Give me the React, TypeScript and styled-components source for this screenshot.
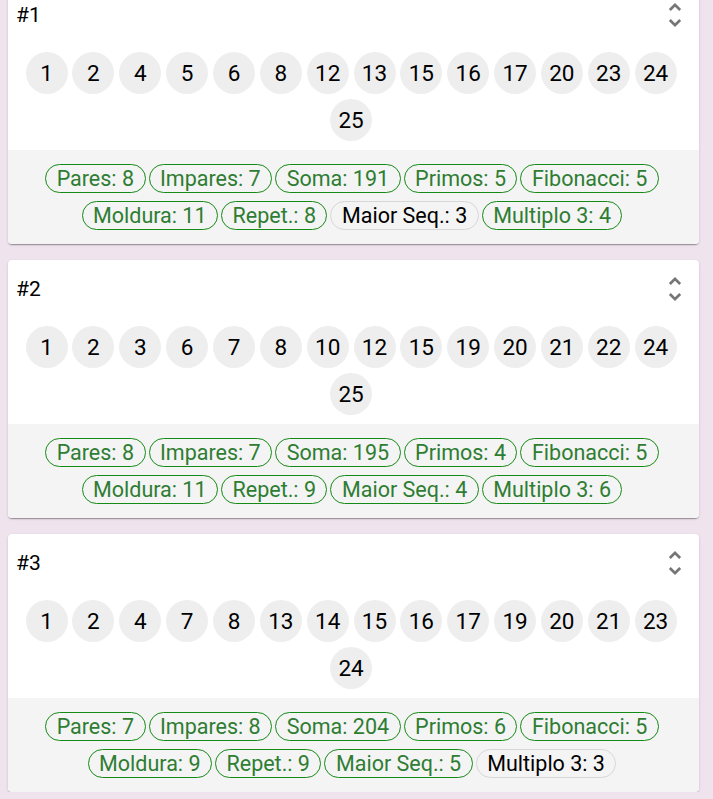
import React from "react";
import styled, { createGlobalStyle } from "styled-components";

const GlobalStyle = createGlobalStyle`
  html, body {
    margin: 0;
    padding: 0;
    background: #efe3ee;
    font-family: Roboto, "Liberation Sans", Arial, sans-serif;
    overflow: hidden;
  }
`;

const Page = styled.main`
  display: flex;
  flex-direction: column;
  gap: 16px;
  padding: 0 14px 0 8px;
  margin-top: -14px;
`;

const Card = styled.section`
  background: #ffffff;
  border-radius: 4px;
  overflow: hidden;
  box-shadow: 0px 2px 1px -1px rgba(0, 0, 0, 0.2),
    0px 1px 1px 0px rgba(0, 0, 0, 0.14), 0px 1px 3px 0px rgba(0, 0, 0, 0.12);
`;

const Header = styled.header`
  display: flex;
  align-items: center;
  justify-content: space-between;
  padding: 13px 8px 0 8px;
  height: 32px;
`;

const Title = styled.h2`
  margin: 0;
  font-size: 21px;
  font-weight: 400;
  line-height: 30px;
  color: #000;
`;

const IconButton = styled.button`
  display: flex;
  align-items: center;
  justify-content: center;
  width: 32px;
  height: 32px;
  padding: 0;
  border: none;
  background: transparent;
  color: #767676;
`;

const Numbers = styled.div`
  display: flex;
  flex-wrap: wrap;
  justify-content: center;
  padding: 21px 16px 4px;
`;

const Ball = styled.span`
  display: flex;
  align-items: center;
  justify-content: center;
  width: 42px;
  height: 42px;
  margin: 0 4.85px 5px 0;
  border-radius: 50%;
  background: #eeeeee;
  color: #000;
  font-size: 22.5px;
  font-weight: 400;
  line-height: 1;
`;

const Stats = styled.div`
  display: flex;
  flex-wrap: wrap;
  justify-content: center;
  background: #f4f4f4;
  padding: 14px 8px 6px;
`;

const Pill = styled.span<{ $ok: boolean }>`
  display: inline-block;
  margin: 0 3px 8px 0;
  padding: 0 10.5px;
  height: 27px;
  line-height: 27px;
  border-radius: 15px;
  border: 1px solid ${(p) => (p.$ok ? "#168a16" : "#d6d6d6")};
  color: ${(p) => (p.$ok ? "#2e7d32" : "#000")};
  font-size: 21.5px;
  font-weight: 400;
  white-space: nowrap;
`;

const UnfoldIcon = () => (
  <svg width="32" height="32" viewBox="0 0 24 24" fill="currentColor">
    <path d="M12 5.83 15.17 9l1.41-1.41L12 3 7.41 7.59 8.83 9zm0 12.34L8.83 15l-1.41 1.41L12 21l4.59-4.59L15.17 15z" />
  </svg>
);

type Stat = { label: string; ok: boolean };
type Game = { id: number; nums: number[]; stats: Stat[] };

const mk = (label: string, ok = true): Stat => ({ label, ok });

const games: Game[] = [
  {
    id: 1,
    nums: [1, 2, 4, 5, 6, 8, 12, 13, 15, 16, 17, 20, 23, 24, 25],
    stats: [
      mk("Pares: 8"),
      mk("Impares: 7"),
      mk("Soma: 191"),
      mk("Primos: 5"),
      mk("Fibonacci: 5"),
      mk("Moldura: 11"),
      mk("Repet.: 8"),
      mk("Maior Seq.: 3", false),
      mk("Multiplo 3: 4"),
    ],
  },
  {
    id: 2,
    nums: [1, 2, 3, 6, 7, 8, 10, 12, 15, 19, 20, 21, 22, 24, 25],
    stats: [
      mk("Pares: 8"),
      mk("Impares: 7"),
      mk("Soma: 195"),
      mk("Primos: 4"),
      mk("Fibonacci: 5"),
      mk("Moldura: 11"),
      mk("Repet.: 9"),
      mk("Maior Seq.: 4"),
      mk("Multiplo 3: 6"),
    ],
  },
  {
    id: 3,
    nums: [1, 2, 4, 7, 8, 13, 14, 15, 16, 17, 19, 20, 21, 23, 24],
    stats: [
      mk("Pares: 7"),
      mk("Impares: 8"),
      mk("Soma: 204"),
      mk("Primos: 6"),
      mk("Fibonacci: 5"),
      mk("Moldura: 9"),
      mk("Repet.: 9"),
      mk("Maior Seq.: 5"),
      mk("Multiplo 3: 3", false),
    ],
  },
];

export default function App() {
  return (
    <>
      <GlobalStyle />
      <Page>
        {games.map((g) => (
          <Card key={g.id}>
            <Header>
              <Title>#{g.id}</Title>
              <IconButton aria-label="expandir">
                <UnfoldIcon />
              </IconButton>
            </Header>
            <Numbers>
              {g.nums.map((n) => (
                <Ball key={n}>{n}</Ball>
              ))}
            </Numbers>
            <Stats>
              {g.stats.map((s) => (
                <Pill key={s.label} $ok={s.ok}>
                  {s.label}
                </Pill>
              ))}
            </Stats>
          </Card>
        ))}
      </Page>
    </>
  );
}
